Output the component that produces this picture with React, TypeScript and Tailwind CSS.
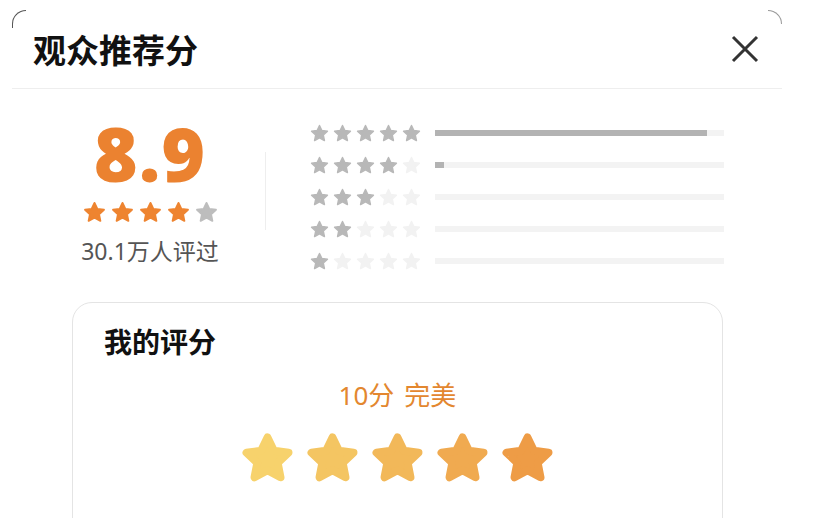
import React from "react";

const STAR = "M12 2.8l2.75 5.8 6.35.75-4.7 4.4 1.25 6.3L12 16.9l-5.65 3.15 1.25-6.3-4.7-4.4 6.35-.75z";
const BIG_STAR = "M12 3.4l2.6 5.45 5.95.78-4.4 4.12 1.15 5.9L12 16.75l-5.3 2.9 1.15-5.9-4.4-4.12 5.95-.78z";

function Star({ size, color, round = 1.6, d = STAR }: { size: number; color: string; round?: number; d?: string }) {
  return (
    <svg width={size} height={size} viewBox="0 0 24 24" className="block shrink-0">
      <path d={d} fill={color} stroke={color} strokeWidth={round} strokeLinejoin="round" />
    </svg>
  );
}

const rows = [
  { filled: 5, pct: 94 },
  { filled: 4, pct: 3.2 },
  { filled: 3, pct: 0 },
  { filled: 2, pct: 0 },
  { filled: 1, pct: 0 },
];

const bigColors = ["#F7D26C", "#F4C562", "#F2B859", "#F0AA50", "#EE9C46"];

export default function App() {
  return (
    <div
      className="relative w-[816px] h-[518px] overflow-hidden bg-white"
      style={{ fontFamily: '"Noto Sans", "Noto Sans CJK SC", sans-serif' }}
    >
      {/* modal corner arcs */}
      <div className="absolute left-[12px] top-[10px] w-[14px] h-[18px] rounded-tl-[16px] border-l border-t border-[#555]" />
      <div className="absolute left-[768px] top-[10px] w-[14px] h-[14px] rounded-tr-[16px] border-r border-t border-[#999]" />

      <div className="ml-[12px] mr-[34px] pt-[10px]">
        {/* header */}
        <div className="flex h-[79px] items-center justify-between border-b border-[#eeeeee] pl-[21px] pr-[23px]">
          <div className="text-[33px] font-bold leading-none text-[#111]" style={{ fontFamily: '"Noto Sans CJK SC", sans-serif' }}>
            观众推荐分
          </div>
          <svg width="28" height="28" viewBox="0 0 28 28" className="block">
            <path d="M2 2L26 26M26 2L2 26" stroke="#333" strokeWidth="3" strokeLinecap="butt" />
          </svg>
        </div>

        {/* summary */}
        <div className="flex pt-[27px]">
          <div className="ml-[48px] flex w-[180px] flex-col items-center">
            <div
              className="text-[75px] font-extrabold leading-none tracking-[1px] text-[#EB8230]"
              style={{ fontFamily: '"Open Sans", sans-serif' }}
            >
              8.9
            </div>
            <div className="mt-[9px] flex gap-[3px]">
              {[0, 1, 2, 3, 4].map((i) => (
                <Star key={i} size={25} color={i < 4 ? "#EE8430" : "#BDBDBD"} round={1.8} />
              ))}
            </div>
            <div className="mt-[15px] text-[23px] leading-none text-[#555]" style={{ fontFamily: '"Noto Sans", "Noto Sans CJK SC", sans-serif' }}>
              30.1万人评过
            </div>
          </div>

          <div className="ml-[25px] mt-[36px] h-[78px] w-px bg-[#eeeeee]" />

          <div className="ml-[43px] mt-[1px] flex flex-col">
            {rows.map((r, idx) => (
              <div key={idx} className="flex h-[32px] items-center">
                <div className="flex gap-[2px]">
                  {[0, 1, 2, 3, 4].map((i) => (
                    <Star key={i} size={21} color={i < r.filled ? "#B8B8B8" : "#F2F2F2"} />
                  ))}
                </div>
                <div className="ml-[13px] h-[6px] w-[289px] bg-[#F3F3F3]">
                  <div className="h-full bg-[#B3B3B3]" style={{ width: `${r.pct}%` }} />
                </div>
              </div>
            ))}
          </div>
        </div>

        {/* my rating card */}
        <div className="ml-[60px] mt-[25px] h-[260px] w-[651px] rounded-[20px] border border-[#e4e4e4] pl-[31px] pt-[24px]">
          <div className="text-[28px] font-bold leading-none text-[#111]" style={{ fontFamily: '"Noto Sans CJK SC", sans-serif' }}>
            我的评分
          </div>
          <div className="mt-[27px] flex justify-center pr-[31px] text-[26px] leading-none text-[#E3872F]" style={{ fontFamily: '"Noto Sans", "Noto Sans CJK SC", sans-serif' }}>
            <span>10分</span>
            <span className="ml-[10px]">完美</span>
          </div>
          <div className="mt-[21px] flex justify-center gap-[6px] pr-[31px]">
            {bigColors.map((c, i) => (
              <Star key={i} size={59} color={c} round={3.2} d={BIG_STAR} />
            ))}
          </div>
        </div>
      </div>
    </div>
  );
}
